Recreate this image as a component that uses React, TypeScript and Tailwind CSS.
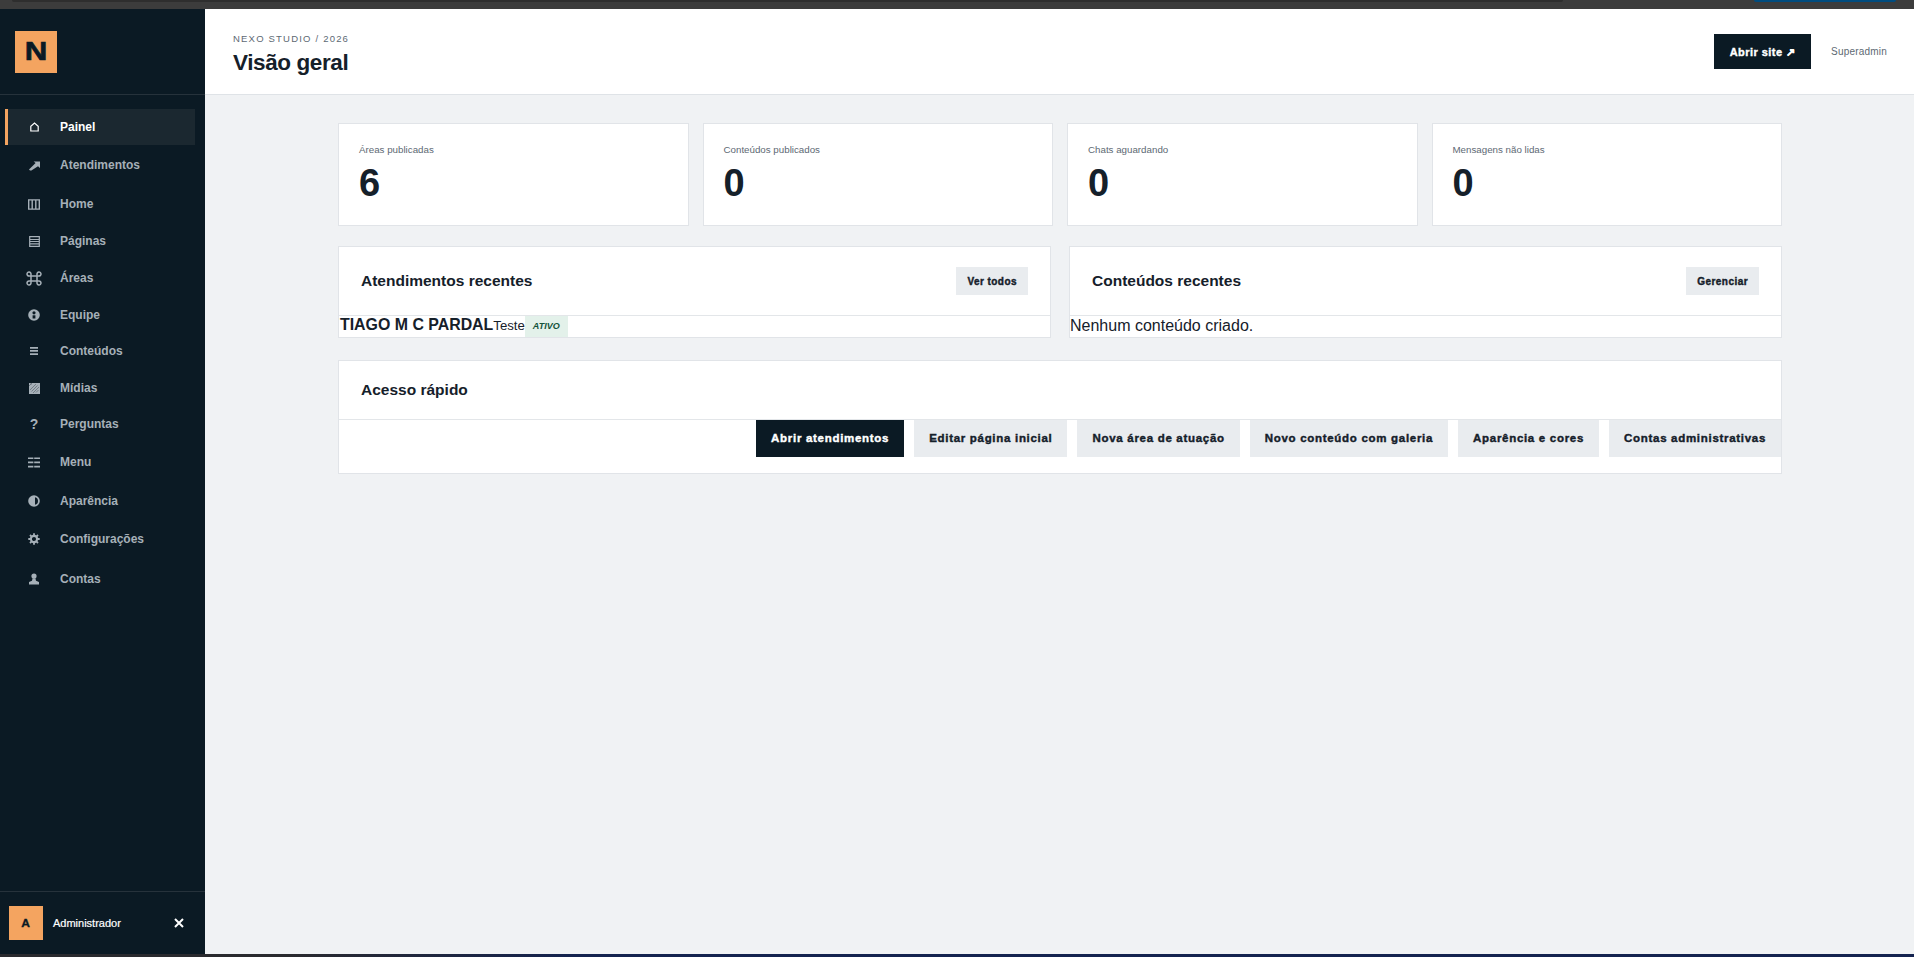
import React from "react";

const F = "font-['Liberation_Sans',Arial,sans-serif]";

const IconHome = () => <svg width="9" height="10" viewBox="0 0 9 10" fill="none" stroke="currentColor" strokeWidth="1.2"><path d="M.8 9h7.4V4.3L4.5 1 .8 4.3z" /></svg>;
const IconArrow = () => <svg width="11" height="11" viewBox="0 0 11 11" fill="currentColor"><path d="M1 10.6 0 9.4 6.6 3 4.6 1.4H11V8L9 6.2 2.4 10.6z" /></svg>;
const IconCols = () => <svg width="12" height="11" viewBox="0 0 12 11" fill="none" stroke="currentColor" strokeWidth="1.4"><path d="M.7.9h10.6v9.2H.7zM4.2.9v9.2M7.8.9v9.2" /></svg>;
const IconLines = () => <svg width="11" height="11" viewBox="0 0 11 11" fill="none" stroke="currentColor" strokeWidth="1.2"><path d="M.7.7h9.6v9.6H.7zM.7 3.5h9.6M.7 5.5h9.6M.7 7.8h9.6" /></svg>;
const IconCmd = () => <svg width="16" height="15" viewBox="0 0 16 15" fill="none" stroke="currentColor" strokeWidth="1.5"><path d="M5 5h6v5H5zM5 5V3.2A2 2 0 1 0 3 5h2M11 5V3.2A2 2 0 1 1 13 5h-2M5 10v1.8A2 2 0 1 1 3 10h2M11 10v1.8A2 2 0 1 0 13 10h-2" /></svg>;
const IconTeam = () => <svg width="12" height="12" viewBox="0 0 12 12"><circle cx="6" cy="6" r="5.8" fill="currentColor" /><circle cx="6" cy="3.8" r="1.6" fill="#0b1a24" /><path d="M4.6 6.3h2.8v3.2H4.6z" fill="#0b1a24" /></svg>;
const IconEq = () => <svg width="8" height="8" viewBox="0 0 8 8" fill="currentColor"><path d="M0 0h8v1.7H0zM0 3.1h8v1.7H0zM0 6.2h8v1.7H0z" /></svg>;
const IconMedia = () => <svg width="11" height="11" viewBox="0 0 11 11"><rect width="11" height="11" fill="currentColor" /><path d="M1 1h2M0 3 3 0M1 7 7 1M2.5 8.5 8.5 2.5M4 10 10 4M7 9.5 9.5 7" stroke="#0b1a24" strokeWidth=".6" opacity=".55" /></svg>;
const IconQ = () => <span className="text-[14px] font-bold leading-none">?</span>;
const IconMenu = () => <svg width="12" height="11" viewBox="0 0 12 11" fill="currentColor"><path d="M0 .4h5.4v1.7H0zM6.2.4H12v1.7H6.2zM0 4.6h5.4v1.7H0zM6.2 4.6H12v1.7H6.2zM0 8.8h5.4v1.7H0zM6.2 8.8H12v1.7H6.2z" /></svg>;
const IconHalf = () => <svg width="12" height="12" viewBox="0 0 12 12"><circle cx="6" cy="6" r="5.8" fill="currentColor" /><path d="M7 2.2a3.9 3.9 0 0 1 0 7.6z" fill="#0b1a24" /></svg>;
const IconGear = () => <svg width="12" height="12" viewBox="0 0 12 12" fill="none" stroke="currentColor"><circle cx="6" cy="6" r="3.1" strokeWidth="2.1" /><path d="M6 .3v2M6 9.7v2M.3 6h2M9.7 6h2M2 2l1.4 1.4M8.6 8.6 10 10M10 2 8.6 3.4M3.4 8.6 2 10" strokeWidth="1.8" /></svg>;
const IconUser = () => <svg width="10" height="12" viewBox="0 0 10 12" fill="currentColor"><circle cx="5" cy="3" r="2.6" /><path d="M3.6 5.3h2.8l.6 2.4 3 1.3V11.5H0V9l3-1.3z" /></svg>;

const items: { label: string; icon: React.ReactNode; row: string }[] = [
  { label: "Atendimentos", icon: <IconArrow />, row: "h-[36px] mb-[3px]" },
  { label: "Home", icon: <IconCols />, row: "h-[36px] mb-[1px]" },
  { label: "Páginas", icon: <IconLines />, row: "h-[36px] mb-[1px]" },
  { label: "Áreas", icon: <IconCmd />, row: "h-[36px] mb-[1px]" },
  { label: "Equipe", icon: <IconTeam />, row: "h-[36px]" },
  { label: "Conteúdos", icon: <IconEq />, row: "h-[36px] mb-[1px]" },
  { label: "Mídias", icon: <IconMedia />, row: "h-[36px]" },
  { label: "Perguntas", icon: <IconQ />, row: "h-[36px] mb-[2px]" },
  { label: "Menu", icon: <IconMenu />, row: "h-[36px] mb-[3px]" },
  { label: "Aparência", icon: <IconHalf />, row: "h-[36px] mb-[2px]" },
  { label: "Configurações", icon: <IconGear />, row: "h-[36px] mb-[4px]" },
  { label: "Contas", icon: <IconUser />, row: "h-[36px]" },
];

const stats = [
  ["Áreas publicadas", "6"],
  ["Conteúdos publicados", "0"],
  ["Chats aguardando", "0"],
  ["Mensagens não lidas", "0"],
];

const quick = ["Editar página inicial", "Nova área de atuação", "Novo conteúdo com galeria", "Aparência e cores", "Contas administrativas"];

const heavy = "font-bold [-webkit-text-stroke:0.4px_currentColor] tracking-[0.45px]";
const heavyQuick = "font-bold [-webkit-text-stroke:0.4px_currentColor] tracking-[0.7px] text-[11.5px]";

function PanelHead({ title, action }: { title: string; action: string }) {
  return (
    <div className="h-[69px] flex items-center justify-between pl-[22px] pr-[22px] border-b border-[#e3e6e9]">
      <h2 className="text-[15.5px] font-bold text-[#15202a]">{title}</h2>
      <span className={`h-[28px] px-[11px] flex items-center bg-[#e9ecef] text-[10px] text-[#15202a] ${heavy}`}>{action}</span>
    </div>
  );
}

export default function App() {
  return (
    <div className={`${F} h-screen w-full flex flex-col overflow-hidden bg-[#f0f2f4]`}>
      <div className="h-[9px] shrink-0 bg-[#3c3c3c] flex justify-between">
        <div className="ml-[12px] w-[1551px] h-[2px] bg-[#2e2e2e] rounded-b" />
        <div className="mr-[18px] w-[142px] h-[2px] bg-[#004c7f] rounded-b" />
      </div>
      <div className="flex-1 min-h-0 flex">
        <aside className="w-[205px] shrink-0 bg-[#0b1a24] flex flex-col">
          <div className="h-[86px] shrink-0 border-b border-[#26323b] pl-[15px] pt-[22px]">
            <div className="w-[42px] h-[42px] bg-[#f4a460] flex items-center justify-center text-[#0b1a24] text-[25px] font-bold">
              <span className="inline-block [transform:scaleX(1.25)] [-webkit-text-stroke:0.6px_currentColor]">N</span>
            </div>
          </div>
          <nav className="pt-[14px] pl-[5px] pr-[10px] flex flex-col flex-1">
            <div className="h-[36px] mb-[2px] flex items-center bg-[#1b2830] border-l-[3px] border-[#f4a460] text-white">
              <span className="w-[52px] flex justify-center"><IconHome /></span>
              <span className="text-[12px] font-bold">Painel</span>
            </div>
            {items.map((it) => (
              <div key={it.label} className={`${it.row} flex items-center text-[#a6b0b8]`}>
                <span className="w-[55px] pl-[3px] flex justify-center">{it.icon}</span>
                <span className="text-[12px] font-bold">{it.label}</span>
              </div>
            ))}
          </nav>
          <div className="h-[63px] shrink-0 border-t border-[#26323b] pl-[9px] pr-[21px] flex items-center">
            <div className="w-[34px] h-[34px] bg-[#f4a460] flex items-center justify-center text-[10px] font-bold text-[#0b1a24]">
              <span className="inline-block [transform:scaleX(1.2)] [-webkit-text-stroke:0.3px_currentColor]">A</span>
            </div>
            <span className="ml-[10px] text-[11px] text-white flex-1 [-webkit-text-stroke:0.2px_currentColor]">Administrador</span>
            <svg width="10" height="10" viewBox="0 0 10 10" stroke="white" strokeWidth="2"><path d="M1 1l8 8M9 1l-8 8" /></svg>
          </div>
        </aside>
        <main className="flex-1 min-w-0 flex flex-col">
          <header className="h-[86px] shrink-0 bg-white border-b border-[#dfe3e7] pl-[28px] pr-[27px] flex items-center justify-between">
            <div className="pt-[6px]">
              <div className="text-[9.5px] leading-[12px] tracking-[1.2px] text-[#5d6973]">NEXO STUDIO / 2026</div>
              <h1 className="mt-[4px] text-[22.5px] leading-[28px] font-bold tracking-[-0.4px] text-[#15202a]">Visão geral</h1>
            </div>
            <div className="flex items-center gap-[20px]">
              <span className={`h-[35px] w-[97px] pt-[1px] flex items-center justify-center bg-[#0b1a24] text-white text-[11px] ${heavy}`}>Abrir site ↗</span>
              <span className="text-[10px] tracking-[0.2px] text-[#5d6973]">Superadmin</span>
            </div>
          </header>
          <div className="flex-1 pt-[28px]">
            <div className="w-[1444px] ml-[133px] flex flex-col">
              <div className="grid grid-cols-4 gap-[14px]">
                {stats.map(([l, v]) => (
                  <div key={l} className="h-[103px] bg-white border border-[#e1e4e8] pl-[20px] pt-[20px]">
                    <div className="text-[9.75px] leading-[12px] text-[#5d6973]">{l}</div>
                    <div className="mt-[4px] text-[38px] leading-[46px] font-bold text-[#15202a]">{v}</div>
                  </div>
                ))}
              </div>
              <div className="mt-[20px] grid grid-cols-2 gap-[18px]">
                <div className="h-[92px] bg-white border border-[#e1e4e8]">
                  <PanelHead title="Atendimentos recentes" action="Ver todos" />
                  <div className="flex items-stretch h-[21px] pl-[1px]">
                    <span className="text-[15.9px] leading-[17px] font-bold text-[#15202a]">TIAGO M C PARDAL</span>
                    <span className="text-[13.2px] leading-[20px] text-[#15202a]">Teste</span>
                    <span className="px-[8px] bg-[#e3f1ea] text-[#14533a] text-[9px] leading-[21px] italic font-bold">ATIVO</span>
                  </div>
                </div>
                <div className="h-[92px] bg-white border border-[#e1e4e8]">
                  <PanelHead title="Conteúdos recentes" action="Gerenciar" />
                  <div className="text-[16px] leading-[19px] text-[#15202a]">Nenhum conteúdo criado.</div>
                </div>
              </div>
              <div className="mt-[22px] h-[114px] bg-white border border-[#e1e4e8]">
                <div className="h-[59px] flex items-center pl-[22px] border-b border-[#e3e6e9]">
                  <h2 className="text-[15.5px] font-bold text-[#15202a]">Acesso rápido</h2>
                </div>
                <div className="flex justify-end gap-[10px]">
                  <span className={`h-[37px] px-[15px] pt-[1px] flex items-center bg-[#0b1a24] text-white ${heavyQuick}`}>Abrir atendimentos</span>
                  {quick.map((q) => (
                    <span key={q} className={`h-[37px] px-[15px] pt-[1px] flex items-center bg-[#e9ecef] text-[#15202a] ${heavyQuick}`}>{q}</span>
                  ))}
                </div>
              </div>
            </div>
          </div>
        </main>
      </div>
      <div className="h-[3px] shrink-0 bg-[linear-gradient(90deg,#2a2a2e_0%,#2a2a2e_15%,#14234f_30%,#14234f_100%)]" />
    </div>
  );
}
